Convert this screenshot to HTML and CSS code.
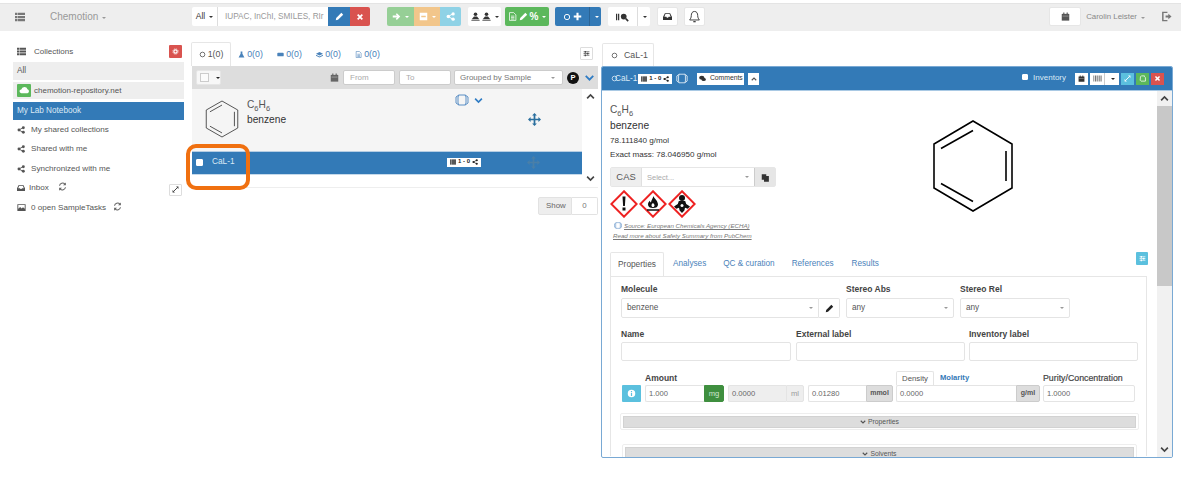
FILE: index.html
```html
<!DOCTYPE html>
<html lang="en">
<head>
<meta charset="utf-8">
<title>Chemotion</title>
<link rel="stylesheet" href="styles.css">
</head>
<body>
<svg class="defs" width="0" height="0" aria-hidden="true">
  <defs>
    <symbol id="i-list" viewBox="0 0 12 12"><path d="M0 1h3v2.700H0zM3.600 1H12v2.700H3.600zM0 4.650h3v2.700H0zM3.600 4.650H12v2.700H3.600zM0 8.300h3V11H0zM3.600 8.300H12V11H3.600z" fill="currentColor"/></symbol>
    <symbol id="i-share" viewBox="0 0 12 12"><path d="M3 6l6-3.500M3 6l6 3.500" stroke="currentColor" stroke-width="1.300" fill="none"/><circle cx="3" cy="6" r="2.200" fill="currentColor"/><circle cx="9.500" cy="2.500" r="2.200" fill="currentColor"/><circle cx="9.500" cy="9.500" r="2.200" fill="currentColor"/></symbol>
    <symbol id="i-inbox" viewBox="0 0 12 12"><path d="M2.500 1.500h7L12 6.500V10.500H0V6.500zM3.300 2.800L1.800 6.300h2.700l.7 1.200h1.600l.7-1.200h2.700L8.700 2.800z" fill="currentColor" fill-rule="evenodd"/></symbol>
    <symbol id="i-sync" viewBox="0 0 12 12"><path d="M2 5a4.200 4.200 0 0 1 7.200-2.200M10 7a4.200 4.200 0 0 1-7.200 2.200" fill="none" stroke="currentColor" stroke-width="1.400"/><path d="M10.500 0.500v3.800H6.700zM1.500 11.500V7.700h3.800z" fill="currentColor"/></symbol>
    <symbol id="i-expand" viewBox="0 0 12 12"><path d="M7 1h4v4zM5 11H1V7z" fill="currentColor"/><path d="M3.500 8.500l5-5" stroke="currentColor" stroke-width="1.600"/></symbol>
    <symbol id="i-sample" viewBox="0 0 12 12"><circle cx="6" cy="6" r="4" fill="none" stroke="currentColor" stroke-width="1.400"/></symbol>
    <symbol id="i-flask" viewBox="0 0 12 12"><path d="M4.500 1h3v3.500L11 11H1l3.500-6.500z" fill="currentColor"/></symbol>
    <symbol id="i-wellplate" viewBox="0 0 12 12"><rect x="0.500" y="3" width="11" height="6" rx="1.500" fill="currentColor"/></symbol>
    <symbol id="i-layers" viewBox="0 0 12 12"><path d="M6 1.500l6 3-6 3-6-3z" fill="currentColor"/><path d="M0 6.500l6 3 6-3V8l-6 3-6-3z" fill="currentColor"/></symbol>
    <symbol id="i-file" viewBox="0 0 12 12"><path d="M2 .8h5.500L10.500 3.800V11.200H2z M4 5.500h4.500M4 7.500h4.500M4 9.400h4.500" fill="none" stroke="currentColor" stroke-width="1"/></symbol>
    <symbol id="i-cal" viewBox="0 0 12 12"><path d="M1 2.500h10V11.500H1z" fill="currentColor"/><path d="M3 .8h1.500v2.500H3zM7.500 .8H9v2.500H7.500z" fill="currentColor"/><path d="M2 5h8v.8H2z" fill="#fff" opacity=".55"/></symbol>
    <symbol id="i-pencil" viewBox="0 0 12 12"><path d="M1 11l.6-3L8.500 1.100l2.400 2.400L4 10.400z" fill="currentColor"/></symbol>
    <symbol id="i-close" viewBox="0 0 12 12"><path d="M2.500 2.500l7 7M9.500 2.500l-7 7" stroke="currentColor" stroke-width="2.600"/></symbol>
    <symbol id="i-down" viewBox="0 0 12 12"><path d="M1.500 3.500L6 8l4.500-4.500" fill="none" stroke="currentColor" stroke-width="2.200"/></symbol>
    <symbol id="i-up" viewBox="0 0 12 12"><path d="M1.500 8.500L6 4l4.500 4.500" fill="none" stroke="currentColor" stroke-width="2.200"/></symbol>
    <symbol id="i-move" viewBox="0 0 12 12"><path d="M6 0l2.200 2.400H6.800v2.800h2.800V3.800L12 6 9.600 8.200V6.800H6.800v2.800h1.400L6 12 3.800 9.600h1.400V6.800H2.400v1.400L0 6l2.400-2.200v1.400h2.800V2.400H3.800z" fill="currentColor"/></symbol>
    <symbol id="i-hex" viewBox="0 0 14 12"><path d="M3.800 1h6.400L13 3v6l-2.800 2H3.800L1 9V3zM3.800 1L3 3v6l.8 2M10.200 1l.8 2v6l-.8 2" fill="none" stroke="currentColor" stroke-width="1"/></symbol>
    <symbol id="i-sliders" viewBox="0 0 12 12"><path d="M1 3h10M1 6h10M1 9h10" stroke="currentColor" stroke-width="1.200"/><path d="M3 1.500h2v3H3zM7 4.500h2v3H7zM3 7.500h2v3H3z" fill="currentColor"/></symbol>
    <symbol id="i-barcode" viewBox="0 0 12 12"><path d="M.5 2h1v8h-1zM2.500 2h2v8h-2zM5.500 2h1v8h-1zM7.500 2h1.500v8H7.500zM10 2h1.500v8H10z" fill="currentColor"/></symbol>
    <symbol id="i-paste" viewBox="0 0 12 12"><path d="M1 1.500h6V4h3.500V11.500H4V9H1z" fill="currentColor"/></symbol>
    <symbol id="i-copy" viewBox="0 0 12 12"><path d="M2.500 3l1.500-1.500h5.500V3L11 4.500V10.500H3.500L2 9z" fill="none" stroke="currentColor" stroke-width="1.300"/></symbol>
    <symbol id="i-comments" viewBox="0 0 12 12"><ellipse cx="4.800" cy="4.500" rx="4.500" ry="3.200" fill="currentColor"/><ellipse cx="8" cy="7.500" rx="3.800" ry="2.600" fill="currentColor"/></symbol>
    <symbol id="i-arrow" viewBox="0 0 12 12"><path d="M6.500 1.500L11 6l-4.500 4.500L5 9l1.800-1.800H1V4.800h5.800L5 3z" fill="currentColor"/></symbol>
    <symbol id="i-minus-box" viewBox="0 0 12 12"><path d="M1 1h10v10H1zM3 5v2h6V5z" fill="currentColor" fill-rule="evenodd"/></symbol>
    <symbol id="i-plus" viewBox="0 0 12 12"><path d="M4.600 1h2.800v3.600H11v2.800H7.400V11H4.600V7.400H1V4.600h3.600z" fill="currentColor"/></symbol>
    <symbol id="i-user" viewBox="0 0 12 12"><circle cx="6" cy="3" r="2.400" fill="currentColor"/><path d="M1 9.500l3-3.500h4l3 3.500z" fill="currentColor"/><path d="M0.500 10.500h11v1h-11z" fill="currentColor"/></symbol>
    <symbol id="i-gear" viewBox="0 0 12 12"><circle cx="6" cy="6" r="2.800" fill="none" stroke="currentColor" stroke-width="2"/><circle cx="6" cy="6" r="4.600" fill="none" stroke="currentColor" stroke-width="1.300" stroke-dasharray="1.800 1.800"/></symbol>
    <symbol id="i-info" viewBox="0 0 12 12"><path d="M6 1a5 5 0 1 0 0 10A5 5 0 0 0 6 1zM5.200 2.800h1.600v1.500H5.200zM5.200 5.300h1.600v3.900H5.200z" fill="currentColor" fill-rule="evenodd"/></symbol>
    <symbol id="i-search-list" viewBox="0 0 16 12"><path d="M0 2h1.500v8H0zM2.500 2h1.500v8H2.500z" fill="currentColor"/><circle cx="9.500" cy="5.500" r="3.500" fill="currentColor"/><path d="M12 8l3 3" stroke="currentColor" stroke-width="2"/></symbol>
    <symbol id="i-bell" viewBox="0 0 12 14"><path d="M6 1.500c-2.500 0-3.500 2-3.500 4.500 0 2.500-1 3.500-1.800 4.800h10.600C10.500 9.500 9.500 8.500 9.500 6c0-2.500-1-4.500-3.500-4.500z" fill="none" stroke="currentColor" stroke-width="1"/><path d="M4.700 12h2.600v1.300H4.700z" fill="currentColor"/></symbol>
    <symbol id="i-logout" viewBox="0 0 12 12"><path d="M7 1.500H2v9h5" fill="none" stroke="currentColor" stroke-width="1.600"/><path d="M5 5h3V3l3.500 3L8 9V7H5z" fill="currentColor"/></symbol>
    <symbol id="i-camera" viewBox="0 0 12 12"><path d="M.5 1.500h11v9H.5zM1.700 2.700v5l2.500-2.500 2 2 1.800-1.500 2.300 2V2.700z" fill="currentColor" fill-rule="evenodd"/></symbol>
    <symbol id="i-cloud" viewBox="0 0 14 12"><path d="M3 9.500a2.500 2.500 0 0 1-.3-5A4.300 4.300 0 0 1 11 4.300a2.700 2.700 0 0 1 0 5.200z" fill="currentColor"/></symbol>
    <symbol id="i-benzene" viewBox="0 0 40 44"><path d="M20 2L37.500 12V32L20 42 2.500 32V12z M20 6.500L6.600 14M33.800 14V30M20 37.500L6.600 30" fill="none" stroke="currentColor" stroke-width="1"/></symbol>
    <symbol id="i-dia" viewBox="0 0 28 28"><path d="M14 1.300L26.700 14 14 26.700 1.300 14z" fill="#fff" stroke="#e22" stroke-width="2"/></symbol>
  </defs>
</svg>

<header class="navbar">
  <div class="nav-brand">
    <svg class="ic nav-menu"><use href="#i-list"/></svg>
    <span class="brand-name">Chemotion</span><i class="caret caret-muted"></i>
  </div>
  <div class="group search-group">
    <span class="btn btn-white w-all">All<i class="caret"></i></span>
    <span class="search-input">IUPAC, InChI, SMILES, RIr</span>
    <span class="btn btn-blue w-22"><svg class="ic"><use href="#i-pencil"/></svg></span>
    <span class="btn btn-red w-20"><svg class="ic-sm"><use href="#i-close"/></svg></span>
  </div>
  <div class="group g-actions">
    <span class="btn btn-lgreen w-27"><svg class="ic"><use href="#i-arrow"/></svg><i class="caret"></i></span>
    <span class="btn btn-lorange w-26"><svg class="ic"><use href="#i-minus-box"/></svg><i class="caret"></i></span>
    <span class="btn btn-lblue w-21"><svg class="ic"><use href="#i-share"/></svg></span>
  </div>
  <div class="group g-create">
    <span class="btn btn-white w-33"><svg class="ic"><use href="#i-user"/></svg><svg class="ic"><use href="#i-user"/></svg><i class="caret"></i></span>
    <span class="btn btn-green w-44"><svg class="ic"><use href="#i-file"/></svg><svg class="ic"><use href="#i-pencil"/></svg><b class="pct">%</b><i class="caret"></i></span>
  </div>
  <div class="group g-add">
    <span class="btn btn-blue w-34"><svg class="ic-sm"><use href="#i-sample"/></svg><svg class="ic"><use href="#i-plus"/></svg></span>
    <span class="btn btn-blue w-12 sep-left"><i class="caret"></i></span>
  </div>
  <div class="group g-search">
    <span class="btn btn-white w-29"><svg class="ic-w"><use href="#i-search-list"/></svg></span>
    <span class="btn btn-white w-13 sep-left-grey"><i class="caret"></i></span>
  </div>
  <span class="btn btn-white solo w-21 g-inbox"><svg class="ic"><use href="#i-inbox"/></svg></span>
  <span class="btn btn-white solo w-21 g-bell"><svg class="ic-bell"><use href="#i-bell"/></svg></span>
  <div class="nav-user">
    <span class="btn btn-white solo w-32 nav-cal"><svg class="ic"><use href="#i-cal"/></svg></span>
    <span class="user-name">Carolin Leister</span><i class="caret caret-muted"></i>
    <svg class="ic nav-logout"><use href="#i-logout"/></svg>
  </div>
</header>

<main class="layout">
  <aside class="sidebar">
    <div class="side-head">
      <svg class="ic side-ic"><use href="#i-list"/></svg><span class="side-title">Collections</span>
      <span class="btn btn-red gear-btn"><svg class="ic-xs"><use href="#i-gear"/></svg></span>
    </div>
    <div class="side-row grey">All</div>
    <div class="side-row grey repo"><span class="cloud"><svg class="ic-cloud"><use href="#i-cloud"/></svg></span>chemotion-repository.net</div>
    <div class="side-row active">My Lab Notebook</div>
    <div class="side-item"><svg class="ic-s"><use href="#i-share"/></svg>My shared collections</div>
    <div class="side-item"><svg class="ic-s"><use href="#i-share"/></svg>Shared with me</div>
    <div class="side-item"><svg class="ic-s"><use href="#i-share"/></svg>Synchronized with me</div>
    <div class="side-item inbox"><svg class="ic-s"><use href="#i-inbox"/></svg>Inbox<svg class="ic sync"><use href="#i-sync"/></svg>
      <span class="expand-btn"><svg class="ic-xs"><use href="#i-expand"/></svg></span></div>
    <div class="side-item tasks"><svg class="ic-s"><use href="#i-camera"/></svg>0 open SampleTasks<svg class="ic sync"><use href="#i-sync"/></svg></div>
  </aside>

  <section class="list-col">
    <div class="list-tabs">
      <span class="tab active t-sample"><svg class="ic-xs"><use href="#i-sample"/></svg>1(0)</span>
      <span class="tab"><svg class="ic-xs"><use href="#i-flask"/></svg>0(0)</span>
      <span class="tab"><svg class="ic-xs"><use href="#i-wellplate"/></svg>0(0)</span>
      <span class="tab"><svg class="ic-xs"><use href="#i-layers"/></svg>0(0)</span>
      <span class="tab"><svg class="ic-xs"><use href="#i-file"/></svg>0(0)</span>
      <span class="tab-settings"><svg class="ic-xs"><use href="#i-sliders"/></svg></span>
    </div>
    <div class="list-bar">
      <span class="check-btn"><i class="checkbox"></i><i class="caret"></i></span>
      <svg class="ic bar-cal"><use href="#i-cal"/></svg>
      <span class="date-input date-from">From</span>
      <span class="date-input">To</span>
      <span class="group-select">Grouped by Sample<i class="caret caret-muted"></i></span>
      <span class="p-badge">P</span>
      <svg class="bar-chev"><use href="#i-down"/></svg>
    </div>
    <div class="list-body">
      <div class="list-rows">
        <div class="mol-row">
          <svg class="mol-small"><use href="#i-benzene"/></svg>
          <div class="mol-text">
            <div class="formula">C<sub>6</sub>H<sub>6</sub></div>
            <div class="mol-name">benzene</div>
          </div>
          <div class="mol-tools"><svg class="hex"><use href="#i-hex"/></svg><svg class="ic mol-chev"><use href="#i-down"/></svg></div>
          <svg class="move"><use href="#i-move"/></svg>
        </div>
        <div class="sample-row">
          <i class="checkbox white"></i><span class="sample-name">CaL-1</span>
          <span class="mini-tag"><svg class="ic-t"><use href="#i-list"/></svg>1 - 0<svg class="ic-t"><use href="#i-share"/></svg></span>
          <svg class="move faded"><use href="#i-move"/></svg>
        </div>
      </div>
      <div class="list-scroll">
        <svg class="ic"><use href="#i-up"/></svg>
        <svg class="ic"><use href="#i-down"/></svg>
      </div>
    </div>
    <div class="pager"><span class="pager-label">Show</span><span class="pager-value">0</span></div>
  </section>

  <section class="detail-col">
    <div class="detail-tabs"><span class="tab active detail-tab"><svg class="ic-xs"><use href="#i-sample"/></svg>CaL-1</span></div>
    <div class="panel">
      <div class="panel-head">
        <svg class="ic-xs"><use href="#i-sample"/></svg><span class="head-name">CaL-1</span>
        <span class="mini-tag head-tag"><svg class="ic-t"><use href="#i-list"/></svg>1 - 0<svg class="ic-t"><use href="#i-share"/></svg></span>
        <svg class="head-hex"><use href="#i-hex"/></svg>
        <span class="head-btn comments"><svg class="ic-xs"><use href="#i-comments"/></svg>Comments</span>
        <span class="head-btn chev-btn"><svg class="ic-t"><use href="#i-up"/></svg></span>
        <span class="head-right">
          <i class="checkbox white inv-check"></i><span class="inv-label">Inventory</span>
          <span class="head-btn sq"><svg class="ic-xs"><use href="#i-cal"/></svg></span>
          <span class="head-group"><span class="head-btn bar"><svg class="ic-b"><use href="#i-barcode"/></svg></span><span class="head-btn car"><i class="caret"></i></span></span>
          <span class="head-btn sq c-info"><svg class="ic-xs"><use href="#i-expand"/></svg></span>
          <span class="head-btn sq c-green"><svg class="ic-xs"><use href="#i-copy"/></svg></span>
          <span class="head-btn sq c-red"><svg class="ic-xs"><use href="#i-close"/></svg></span>
        </span>
      </div>
      <div class="panel-body">
        <div class="panel-content">
          <div class="summary">
            <div class="summary-left">
              <div class="formula">C<sub>6</sub>H<sub>6</sub></div>
              <div class="mol-name">benzene</div>
              <div class="mass">78.111840 g/mol</div>
              <div class="mass">Exact mass: 78.046950 g/mol</div>
              <div class="cas">
                <span class="cas-label">CAS</span>
                <span class="cas-select">Select...<i class="caret caret-muted"></i></span>
                <span class="cas-btn"><svg class="ic"><use href="#i-paste"/></svg></span>
              </div>
              <div class="hazards">
                <svg class="dia" viewBox="0 0 28 28"><use href="#i-dia"/><path d="M12.500 6.500h3l-.6 9.500h-1.800z M12.500 17.500h3v3h-3z"/></svg>
                <svg class="dia" viewBox="0 0 28 28"><use href="#i-dia"/><path d="M14.500 6c.6 2.700 4.500 4.700 4.500 8.500 0 2.300-2 3.600-5 3.600s-5-1.300-5-3.600c0-1.800 1-2.800 1.800-3.700.3 1 .7 1.500 1.200 1.600.1-2 1.800-3.800 2.500-6.400zM14 12.800c-.6 1-1.500 1.500-1.500 2.600 0 .9.600 1.500 1.500 1.500s1.500-.6 1.500-1.500c0-1.100-1-1.600-1.500-2.600zM8 19.200h12v1.500H8z" fill-rule="evenodd"/></svg>
                <svg class="dia" viewBox="0 0 28 28"><use href="#i-dia"/><circle cx="14" cy="8" r="3"/><path d="M10.800 11h6.400l1 3 3.800 2.500-2.200 2.300-2.800-1-.6 2.600L14 23l-2.400-2.600-.6-2.600-2.800 1L6 16.500 9.800 14z"/><circle cx="14" cy="15.500" r="1.500" fill="#fff"/></svg>
              </div>
              <div class="source"><svg class="ic-src"><use href="#i-hex"/></svg><span>Source: European Chemicals Agency (ECHA)</span></div>
              <div class="source more">Read more about Safety Summary from PubChem</div>
            </div>
            <svg class="structure" viewBox="0 0 84 96">
              <path d="M42 3L81 26V70L42 93 3 70V26z M42 12.500L10 30.500M75 33V63M42 83.500L10 65.500" fill="none" stroke="#000" stroke-width="1.600"/>
            </svg>
          </div>
          <div class="detail-nav">
            <span class="tab active d-prop">Properties</span>
            <span class="d-link l-ana">Analyses</span>
            <span class="d-link l-qc">QC &amp; curation</span>
            <span class="d-link l-ref">References</span>
            <span class="d-link l-res">Results</span>
            <span class="info-sq"><svg class="ic-xs"><use href="#i-sliders"/></svg></span>
          </div>
          <div class="prop-pane">
            <div class="row-mol">
              <div class="field f-mol">
                <label class="lbl">Molecule</label>
                <div class="select-pen">
                  <span class="select no-right">benzene<i class="caret caret-muted"></i></span>
                  <span class="pen-btn"><svg class="ic"><use href="#i-pencil"/></svg></span>
                </div>
              </div>
              <div class="field f-stereo-a"><label class="lbl">Stereo Abs</label><span class="select">any<i class="caret caret-muted"></i></span></div>
              <div class="field f-stereo-r"><label class="lbl">Stereo Rel</label><span class="select">any<i class="caret caret-muted"></i></span></div>
            </div>
            <div class="row-names">
              <div class="field"><label class="lbl">Name</label><span class="input"></span></div>
              <div class="field"><label class="lbl">External label</label><span class="input"></span></div>
              <div class="field"><label class="lbl">Inventory label</label><span class="input"></span></div>
            </div>
            <div class="row-amount">
              <span class="amount-info"><svg class="ic"><use href="#i-info"/></svg></span>
              <div class="amount-block">
                <label class="lbl">Amount</label>
                <div class="amount-inputs">
                  <span class="unit-group u-mg"><span class="val">1.000</span><span class="unit green">mg</span></span>
                  <span class="unit-group u-ml"><span class="val disabled">0.0000</span><span class="unit light">ml</span></span>
                  <span class="unit-group u-mmol"><span class="val">0.01280</span><span class="unit dark">mmol</span></span>
                </div>
              </div>
              <div class="density-block">
                <div class="density-tabs"><span class="dens-tab">Density</span><span class="dens-link">Molarity</span></div>
                <span class="unit-group u-dens"><span class="val">0.0000</span><span class="unit dark">g/ml</span></span>
              </div>
              <div class="purity-block">
                <label class="lbl lbl-purity">Purity/Concentration</label>
                <span class="unit-group u-pur"><span class="val">1.0000</span></span>
              </div>
            </div>
            <div class="acc acc-prop"><div class="acc-bar"><svg class="ic-t"><use href="#i-down"/></svg>Properties</div></div>
            <div class="acc acc-solv"><div class="acc-bar"><svg class="ic-t"><use href="#i-down"/></svg>Solvents</div></div>
          </div>
        </div>
        <div class="panel-scroll">
          <span class="sb-btn"><svg class="ic"><use href="#i-up"/></svg></span>
          <span class="sb-thumb"></span>
          <span class="sb-track"><svg class="ic"><use href="#i-down"/></svg></span>
        </div>
      </div>
    </div>
  </section>
</main>
<div class="highlight"></div>
</body>
</html>
```

FILE: styles.css
```css
* { box-sizing: border-box; }
html, body { margin: 0; padding: 0; }
body {
  width: 1181px; height: 491px; overflow: hidden; position: relative;
  background: #fff; color: #333;
  font: 9.4px/1.2 "Liberation Sans", Arial, sans-serif;
}
.defs { position: absolute; }
svg { display: block; flex: none; }
i { font-style: normal; }

.ic { width: 9px; height: 9px; }
.ic-sm { width: 8px; height: 8px; }
.ic-xs { width: 7px; height: 7px; }
.ic-s { width: 8px; height: 8px; }
.ic-t { width: 6px; height: 6px; }
.ic-w { width: 13px; height: 10px; }
.ic-bell { width: 11px; height: 13px; }
.ic-b { width: 11px; height: 9px; }
.caret {
  display: inline-block; width: 0; height: 0; flex: none; margin-left: 2px;
  border-top: 2px solid currentColor; border-left: 2px solid transparent; border-right: 2px solid transparent;
}
.caret-muted { color: #999; }

/* navbar */
.navbar {
  display: flex; align-items: center; height: 28px; margin-top: 3px; padding-bottom: 2px;
  background: #eee; border-top: 1px solid #e4e4e4; color: #777;
}
.nav-brand { display: flex; align-items: center; width: 192px; padding-left: 15px; }
.nav-menu { color: #777; width: 10px; height: 10px; }
.brand-name { margin-left: 25px; font-size: 10px; color: #999; }
.nav-brand .caret { margin-left: 4px; margin-top: 2px; }
.group { display: flex; height: 19px; border-radius: 2px; overflow: hidden; }
.btn { display: flex; align-items: center; justify-content: center; gap: 2px; height: 19px; color: #fff; flex: none; }
.btn-white { background: #fff; color: #333; }
.btn-blue { background: #337ab7; }
.btn-red { background: #d9534f; }
.btn-green { background: #5cb85c; }
.btn-lgreen { background: #96cf96; }
.btn-lorange { background: #f2c68b; }
.btn-lblue { background: #8fd2e6; }
.solo { border-radius: 2px; border: 1px solid #e6e6e6; }
.w-all { width: 26px; border-right: 1px solid #ddd; font-size: 8.500px; }
.w-20 { width: 20px; } .w-21 { width: 21px; } .w-22 { width: 22px; }
.w-26 { width: 26px; } .w-27 { width: 27px; } .w-29 { width: 29px; }
.w-32 { width: 32px; } .w-33 { width: 33px; } .w-34 { width: 34px; }
.w-44 { width: 44px; } .w-12 { width: 12px; } .w-13 { width: 13px; }
.sep-left { border-left: 1px solid #2a6496; }
.sep-left-grey { border-left: 1px solid #ddd; }
.search-input { display: flex; align-items: center; width: 110px; padding-left: 7px; background: #fff; color: #999; font-size: 8.200px; white-space: nowrap; }
.pct { font-size: 10px; color: #fff; }
.g-actions { margin-left: 17px; }
.g-create { margin-left: 7px; gap: 4px; overflow: visible; }
.g-create .btn { border-radius: 2px; }
.g-add { margin-left: 6px; }
.g-search { margin-left: 7px; }
.g-inbox { margin-left: 7px; }
.g-bell { margin-left: 6px; }
.nav-user { display: flex; align-items: center; margin-left: auto; padding-right: 9px; }
.nav-cal { color: #555; }
.user-name { margin-left: 5px; font-size: 7.900px; color: #888; }
.nav-user .caret { margin-left: 4px; margin-top: 2px; }
.nav-logout { margin-left: 16px; color: #777; width: 11px; height: 11px; }

.layout { display: flex; align-items: flex-start; }

/* sidebar */
.sidebar { width: 171px; margin: 14px 0 0 13px; color: #555; }
.side-head { display: flex; align-items: center; height: 13px; margin-bottom: 4px; }
.side-ic { margin-left: 4px; width: 9px; height: 9px; }
.side-title { margin-left: 8px; font-size: 8px; }
.gear-btn { width: 13px; height: 13px; margin-left: auto; margin-right: 2px; border-radius: 1px; }
.side-row { display: flex; align-items: center; height: 18px; padding-left: 4px; margin-bottom: 2px; font-size: 8.200px; }
.grey { background: #eee; }
.repo { height: 17px; margin-bottom: 3px; font-size: 8px; }
.cloud { display: flex; align-items: center; justify-content: center; width: 14px; height: 13px; margin-right: 3px; background: #5cb85c; border-radius: 1px; color: #fff; }
.ic-cloud { width: 11px; height: 9px; }
.active.side-row { background: #337ab7; color: #dbe9f5; height: 18px; margin-bottom: 0; }
.side-item { display: flex; align-items: center; height: 19.500px; padding-left: 4px; gap: 6px; font-size: 8.100px; position: relative; }
.inbox { gap: 4px; }
.tasks { gap: 5px; }
.tasks .ic-s { width: 9px; height: 9px; }
.sync { margin: -3px 0 0 5px; color: #666; }
.tasks .sync { margin-left: 2px; }
.expand-btn { display: flex; align-items: center; justify-content: center; width: 13px; height: 12px; margin-left: auto; margin-right: 2px; margin-top: 3px; border: 1px solid #ddd; border-radius: 1px; color: #333; }

/* list */
.list-col { width: 407px; margin: 11px 0 0 7px; }
.list-tabs { display: flex; align-items: flex-end; height: 24px; color: #337ab7; position: relative; }
.tab { display: flex; align-items: center; justify-content: center; gap: 2px; height: 24px; width: 39px; font-size: 8.800px; color: #4a82ba; }
.tab.active { color: #555; background: #fff; border: 1px solid #e6e6e6; border-bottom: 0; border-radius: 2px 2px 0 0; }
.t-sample { width: 40px; }
.tab-settings { display: flex; align-items: center; justify-content: center; width: 13px; height: 13px; margin: 0 5px 6px auto; border: 1px solid #ddd; border-radius: 1px; color: #444; }
.list-bar { display: flex; align-items: center; height: 23px; margin-left: 1px; background: #ddd; padding-left: 4px; }
.check-btn { display: flex; align-items: center; gap: 5px; width: 25px; height: 15px; padding-left: 3px; background: #f7f7f7; border: 1px solid #e6e6e6; border-radius: 2px; color: #222; }
.checkbox { display: block; width: 9px; height: 9px; background: #fbfbfb; border: 1px solid #bbb; flex: none; }
.checkbox.white { background: #fff; border-color: #fff; border-radius: 1px; }
.check-btn .checkbox { border-color: #ccc; }
.bar-cal { margin-left: auto; margin-right: 4px; width: 9px; height: 9px; color: #666; }
.date-input { display: flex; align-items: center; width: 52px; height: 15px; margin-right: 3px; padding-left: 6px; background: #fff; border: 1px solid #ccc; border-radius: 2px; color: #aaa; font-size: 8px; }
.date-from { margin-right: 4px; }
.group-select { display: flex; align-items: center; justify-content: space-between; width: 109px; height: 15px; padding: 0 7px 0 5px; background: #fff; border: 1px solid #ccc; border-radius: 2px; color: #777; font-size: 8px; }
.p-badge { display: flex; align-items: center; justify-content: center; width: 12px; height: 12px; margin-left: 4px; border-radius: 50%; background: #111; color: #fff; font-size: 7.500px; font-weight: bold; }
.bar-chev { width: 11px; height: 10px; margin: 0 3px 0 5px; color: #2f7cc4; }
.list-body { display: flex; margin-left: 1px; height: 99px; border-bottom: 1px solid #eee; }
.list-rows { width: 390px; }
.mol-row { display: flex; height: 63px; background: #f5f5f5; padding-left: 12px; color: #333; border-bottom: 1px solid #b5cde3; }
.mol-small { width: 36px; height: 42px; margin-top: 9px; color: #444; }
.mol-text { width: 208px; margin: 9px 0 0 7px; }
.formula { font-size: 10.200px; line-height: 13px; color: #555; }
.formula sub { font-size: 7.500px; line-height: 0; }
.mol-name { font-size: 10.200px; line-height: 17px; color: #333; }
.mol-tools { display: flex; align-items: flex-start; gap: 5px; width: 73px; margin-top: 5px; color: #2f7cc4; }
.hex { width: 14px; height: 12px; color: #5b8fc5; }
.mol-chev { margin-top: 2px; }
.move { width: 13px; height: 13px; margin-top: 24px; color: #2a6f9e; }
.sample-row { display: flex; align-items: center; height: 23px; padding: 0 0 2px 4px; background: #337ab7; color: #dbe9f5; border-bottom: 1px solid #c5d9ea; }
.sample-row .checkbox { width: 7px; height: 7px; }
.sample-name { margin-left: 9px; width: 235px; font-size: 8.300px; }
.mini-tag { display: inline-flex; align-items: center; justify-content: center; gap: 2px; height: 9px; width: 34px; background: #fff; color: #222; font-size: 6px; font-weight: bold; flex: none; }
.sample-row .move { margin: 0 0 0 46px; color: #4a7fa8; }
.list-scroll { flex: 1; display: flex; flex-direction: column; justify-content: space-between; align-items: center; padding: 3px 0 4px; color: #444; }
.pager { display: flex; justify-content: flex-end; margin-top: 9px; height: 18px; font-size: 7.900px; }
.pager-label { display: flex; align-items: center; padding: 0 7px; width: 34px; background: #eee; border: 1px solid #e2e2e2; border-radius: 2px 0 0 2px; color: #666; }
.pager-value { display: flex; align-items: center; justify-content: center; width: 26px; border: 1px solid #e2e2e2; border-left: 0; border-radius: 0 2px 2px 0; color: #777; }

/* detail */
.detail-col { width: 572px; margin: 12px 0 0 3px; }
.detail-tabs { display: flex; height: 23px; padding-left: 1px; }
.detail-tab { width: 52px; height: 23px; justify-content: flex-start; gap: 6px; padding-left: 8px; }
.panel { height: 392px; border: 1px solid #79a9d4; border-radius: 2px; overflow: hidden; }
.panel-head { display: flex; align-items: center; height: 24px; background: #337ab7; color: #dbe9f5; padding-left: 9px; border-bottom: 1px solid #a9c9e4; }
.head-name { margin-left: -3px; font-size: 8.200px; }
.head-tag { margin-left: 1px; height: 10px; width: 34px; }
.head-hex { width: 12px; height: 11px; margin-left: 4px; color: #e6f0f8; }
.head-btn { display: flex; align-items: center; justify-content: center; height: 12px; background: #fff; color: #333; flex: none; }
.comments { width: 47px; gap: 4px; margin-left: 9px; font-size: 6.800px; }
.chev-btn { width: 11px; margin-left: 4px; color: #555; }
.head-right { display: flex; align-items: center; margin-left: auto; padding-right: 8px; gap: 2px; }
.inv-check { width: 6px; height: 6px; margin-right: 2px; margin-top: -3px; }
.inv-label { margin: 0 7px 1px 1px; font-size: 8px; }
.sq { width: 13px; }
.head-group { display: flex; }
.bar { width: 15px; border-right: 1px solid #ccc; color: #777; }
.car { width: 14px; color: #222; }
.c-info { background: #5bc0de; color: #fff; }
.c-green { background: #5cb85c; color: #fff; }
.c-red { background: #d9534f; color: #fff; }
.panel-body { display: flex; height: 366px; }
.panel-content { width: 555px; overflow: hidden; padding-left: 8px; }
.summary { display: flex; height: 161px; padding-top: 12px; }
.summary-left { width: 322px; color: #333; }
.summary .formula { line-height: 14px; }
.summary .mol-name { line-height: 17px; }
.mass { font-size: 8.100px; line-height: 13.500px; }
.cas { display: flex; width: 166px; height: 20px; margin-top: 6px; border: 1px solid #e6e6e6; border-radius: 2px; }
.cas-label { display: flex; align-items: center; justify-content: center; width: 31px; background: #eee; color: #555; border-right: 1px solid #e0e0e0; }
.cas-select { display: flex; align-items: center; justify-content: space-between; flex: 1; padding: 0 5px; color: #aaa; font-size: 7.500px; }
.cas-btn { display: flex; align-items: center; justify-content: center; width: 21px; background: #e6e6e6; color: #333; border-left: 1px solid #ccc; }
.hazards { display: flex; gap: 1px; margin-top: 3px; }
.dia { width: 28px; height: 28px; fill: #111; }
.source { display: flex; align-items: center; gap: 2px; margin-top: 3px; padding-left: 4px; font-size: 6.200px; line-height: 9px; font-style: italic; color: #777; text-decoration: underline; }
.source.more { margin-top: 1px; padding-left: 3px; }
.ic-src { width: 8px; height: 7px; color: #5b8fc5; }
.structure { width: 84px; height: 96px; margin: 15px 0 0 -1px; }
.detail-nav { display: flex; align-items: flex-end; height: 24px; position: relative; }
.d-prop { width: 54px; color: #555; font-size: 8.300px; }
.tab.active.d-prop { font-size: 8.300px; }
.d-link { display: flex; align-items: center; height: 24px; font-size: 8.200px; color: #4a82ba; }
.l-ana { margin-left: 9px; }
.l-qc { margin-left: 17px; }
.l-ref { margin-left: 17px; }
.l-res { margin-left: 18px; }
.info-sq { display: flex; align-items: center; justify-content: center; width: 12px; height: 13px; margin: 0 9px 11px auto; background: #5bc0de; color: #fff; border-radius: 1px; }
.prop-pane { width: 537px; height: 180px; border: 1px solid #e6e6e6; border-bottom: 0; padding: 0 9px 0 10px; }
.field { display: flex; flex-direction: column; }
.lbl { display: block; height: 12px; font-size: 8.500px; line-height: 12px; font-weight: bold; color: #444; }
.row-mol { display: flex; padding-top: 6px; }
.f-mol { width: 219px; }
.f-stereo-a { width: 108px; margin-left: 6px; }
.f-stereo-r { width: 110px; margin-left: 6px; }
.row-mol .lbl { margin-bottom: 3px; }
.select { display: flex; align-items: center; justify-content: space-between; height: 20px; padding: 0 5px; border: 1px solid #e4e4e4; border-radius: 2px; font-size: 8.200px; color: #555; }
.select-pen { display: flex; }
.no-right { flex: 1; border-radius: 2px 0 0 2px; }
.pen-btn { display: flex; align-items: center; justify-content: center; width: 21px; height: 20px; border: 1px solid #e4e4e4; border-left: 0; border-radius: 0 2px 2px 0; color: #222; }
.row-names { display: grid; grid-template-columns: 170px 169px 168px; gap: 5px; margin-top: 10px; }
.row-names .field:nth-child(3) { margin-left: -1px; }
.row-names .lbl { margin-bottom: 2px; }
.input { display: block; height: 19px; border: 1px solid #e4e4e4; border-radius: 2px; }
.row-amount { display: flex; align-items: flex-end; height: 41px; margin-left: 1px; }
.amount-info { display: flex; align-items: center; justify-content: center; width: 19px; height: 17px; background: #5bc0de; color: #fff; border-radius: 1px; flex: none; }
.amount-block { margin-left: 4px; width: 248px; }
.amount-block .lbl { margin-bottom: 1px; }
.amount-inputs { display: flex; }
.unit-group { display: flex; height: 17px; flex: none; font-size: 7.600px; color: #666; }
.val { display: flex; align-items: center; flex: 1; padding-left: 3px; border: 1px solid #e4e4e4; border-right: 0; border-radius: 2px 0 0 2px; }
.disabled { background: #eee; }
.unit { display: flex; align-items: center; justify-content: center; border: 1px solid #e4e4e4; border-radius: 0 2px 2px 0; }
.green { background: #3f8f3f; border-color: #3f8f3f; color: #cfe6cf; width: 20px; }
.light { background: #eee; color: #999; width: 18px; }
.dark { background: #ddd; color: #555; border-color: #ccc; font-weight: bold; font-size: 7px; }
.u-mg { width: 79px; }
.u-ml { width: 76px; margin-left: 4px; }
.u-mmol { width: 85px; margin-left: 4px; }
.u-mmol .dark { width: 27px; }
.density-block { margin-left: 3px; width: 144px; }
.density-tabs { display: flex; align-items: center; height: 14px; font-size: 7.800px; }
.dens-tab { display: flex; align-items: center; justify-content: center; width: 38px; height: 14px; color: #555; border: 1px solid #e4e4e4; border-bottom: 0; border-radius: 2px 2px 0 0; }
.dens-link { margin-left: 6px; color: #337ab7; font-weight: bold; font-size: 7.600px; }
.u-dens { width: 144px; }
.u-dens .dark { width: 24px; }
.purity-block { margin-left: 3px; width: 92px; }
.lbl-purity { white-space: nowrap; margin-bottom: 1px; font-weight: normal; font-size: 8.800px; -webkit-text-stroke: .2px #444; }
.u-pur { width: 92px; }
.u-pur .val { border-right: 1px solid #e4e4e4; border-radius: 2px; }
.acc { border: 1px solid #eee; border-radius: 2px; padding: 2px; }
.acc-bar { display: flex; align-items: center; justify-content: center; gap: 2px; height: 12px; background: #ddd; border: 1px solid #d2d2d2; font-size: 6.800px; color: #555; }
.acc-prop { margin: 11px 0 0 -1px; width: 519px; height: 17px; }
.acc-solv { margin: 14px 0 0 1px; width: 515px; height: 20px; }
.acc-solv .acc-bar { height: 14px; }
.panel-scroll { flex: 1; display: flex; flex-direction: column; background: #f1f1f1; }
.sb-btn { display: flex; align-items: center; justify-content: center; height: 15px; background: #f1f1f1; color: #444; }
.sb-thumb { display: block; height: 180px; background: #c8c8c8; }
.sb-track { flex: 1; display: flex; align-items: flex-end; justify-content: center; padding-bottom: 3px; color: #444; }

.highlight { position: absolute; left: 186px; top: 144px; width: 64px; height: 46px; border: 4px solid #f07010; border-radius: 10px; }
```
